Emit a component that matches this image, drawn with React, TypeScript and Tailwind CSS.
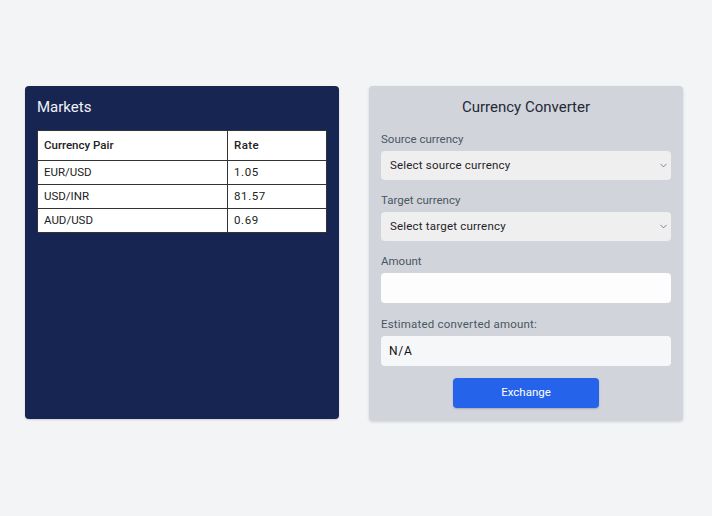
import { ChevronDown } from "lucide-react";

const rates = [
  { pair: "EUR/USD", rate: "1.05" },
  { pair: "USD/INR", rate: "81.57" },
  { pair: "AUD/USD", rate: "0.69" },
];

function SelectBox({ placeholder }: { placeholder: string }) {
  return (
    <div className="flex h-[29px] items-center justify-between rounded-[4px] bg-[#efeff0] pl-[9px] pr-[2px] text-[11.5px] tracking-[0.2px] text-[#1f2328]">
      <span>{placeholder}</span>
      <ChevronDown size={11} strokeWidth={1.5} className="text-gray-600" />
    </div>
  );
}

export default function App() {
  return (
    <div
      className="flex h-[516px] w-[712px] items-start gap-[30px] bg-[#f3f4f6] pl-[25px] pt-[86px]"
      style={{ fontFamily: "Roboto, 'Noto Sans', sans-serif" }}
    >
      {/* Markets */}
      <div className="h-[333px] w-[314px] rounded-[4px] bg-[#172552] p-3 shadow-[0_1px_2px_rgba(0,0,0,0.15)]">
        <h2 className="mb-[14px] text-[15px] leading-[18px] text-[#f1f3f8]">Markets</h2>
        <table className="w-[290px] border-collapse bg-white text-[11.5px] text-[#222]">
          <thead>
            <tr className="h-[30px]">
              <th className="w-[190px] border border-[#333] px-[6px] text-left font-medium">Currency Pair</th>
              <th className="border border-[#333] px-[6px] text-left font-medium tracking-[0.4px]">Rate</th>
            </tr>
          </thead>
          <tbody>
            {rates.map((r) => (
              <tr key={r.pair} className="h-[24px]">
                <td className="border border-[#333] px-[6px]">{r.pair}</td>
                <td className="border border-[#333] px-[6px] tracking-[0.6px]">{r.rate}</td>
              </tr>
            ))}
          </tbody>
        </table>
      </div>

      {/* Converter */}
      <div className="w-[314px] rounded-[4px] bg-[#d1d5db] px-3 pb-[13px] pt-3 shadow-[0_1px_3px_rgba(0,0,0,0.15)]">
        <h2 className="mb-[13px] text-center text-[15px] leading-[18px] text-[#1f2937]">Currency Converter</h2>

        <label className="block text-[11.5px] leading-[20px] text-[#4b5563]">Source currency</label>
        <div className="mt-[2px] mb-[10px]">
          <SelectBox placeholder="Select source currency" />
        </div>

        <label className="block text-[11.5px] leading-[20px] text-[#4b5563]">Target currency</label>
        <div className="mt-[2px] mb-[10px]">
          <SelectBox placeholder="Select target currency" />
        </div>

        <label className="block text-[11.5px] leading-[20px] text-[#4b5563]">Amount</label>
        <div className="mt-[2px] mb-[11px] h-[30px] rounded-[4px] bg-[#fdfdfd]" />

        <label className="block text-[11.5px] leading-[20px] tracking-[0.2px] text-[#4b5563]">Estimated converted amount:</label>
        <div className="mt-[2px] flex h-[30px] items-center rounded-[4px] bg-[#f6f7f9] px-[8px] text-[12px] tracking-[0.8px] text-[#111]">
          N/A
        </div>

        <div className="mt-[12px] flex justify-center">
          <button className="h-[30px] w-[146px] rounded-[4px] bg-[#2563eb] text-[11.5px] text-white shadow-[0_1px_2px_rgba(0,0,0,0.2)]">
            Exchange
          </button>
        </div>
      </div>
    </div>
  );
}
